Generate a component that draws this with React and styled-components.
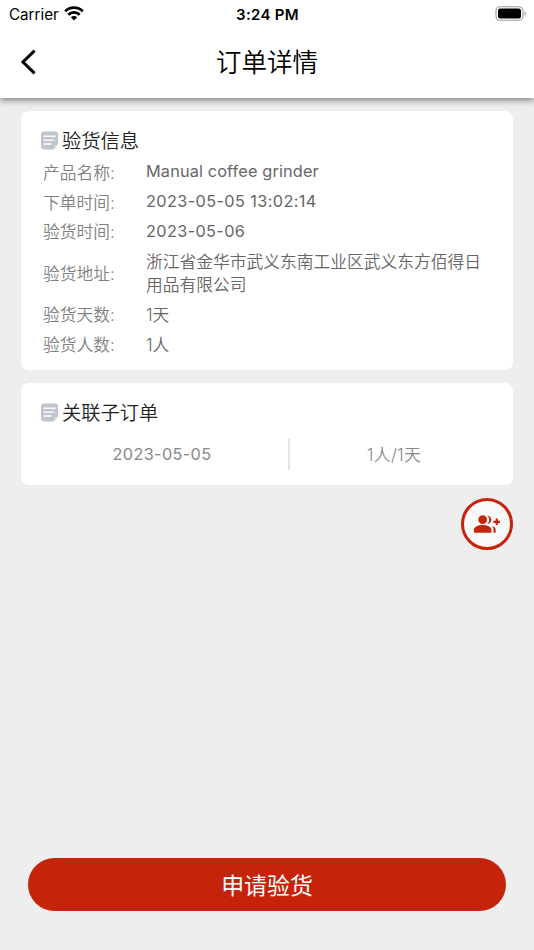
import React from 'react';
import styled, { createGlobalStyle } from 'styled-components';
import { MdGroupAdd } from 'react-icons/md';

const GlobalStyle = createGlobalStyle`
  * {
    box-sizing: border-box;
  }

  body {
    margin: 0;
    background: #eeeeee;
    font-family: Inter, 'Noto Sans CJK SC', sans-serif;
  }
`;

const Page = styled.div`
  height: 950px;
  display: flex;
  flex-direction: column;
  background: #eeeeee;
  overflow: hidden;
`;

const Header = styled.header`
  height: 98px;
  flex-shrink: 0;
  background: #fff;
  box-shadow: 0 2px 7px rgba(0, 0, 0, 0.5);
`;

const StatusBar = styled.div`
  height: 27px;
  padding: 0 7px 0 9px;
  display: grid;
  grid-template-columns: 1fr auto 1fr;
  align-items: center;
  color: #000;
`;

const Carrier = styled.div`
  display: flex;
  align-items: center;
  gap: 5px;
  font-size: 15.2px;
  line-height: 24px;

  span {
    padding-top: 2px;
  }

  svg {
    margin-bottom: 1px;
  }
`;

const Clock = styled.div`
  padding-top: 1px;
  padding-right: 1px;
  font-size: 15px;
  font-weight: 600;
  letter-spacing: 0.3px;
`;

const Battery = styled.svg`
  justify-self: end;
  margin-bottom: 1px;
`;

const NavBar = styled.div`
  height: 69px;
  padding: 0 20px;
  display: grid;
  grid-template-columns: 1fr auto 1fr;
  align-items: center;
`;

const BackButton = styled.button`
  width: 18px;
  height: 26px;
  padding: 0;
  border: 0;
  background: none;
`;

const NavTitle = styled.h1`
  margin: 0 0 1px;
  font-size: 25.6px;
  font-weight: 350;
  line-height: 36px;
  font-family: 'Noto Sans CJK SC', sans-serif;
`;

const Content = styled.main`
  flex: 1;
  padding: 13px 21px 0;
  display: flex;
  flex-direction: column;
  gap: 13px;
`;

const Card = styled.section`
  height: ${({ $height }) => $height}px;
  padding: 16px 20px 0;
  border-radius: 8px;
  background: #fff;
`;

const CardTitle = styled.h2`
  margin: 0;
  height: 26px;
  display: flex;
  align-items: center;
  gap: 4px;
  color: #222;
  font-size: 19.3px;
  font-weight: 350;
  font-family: 'Noto Sans CJK SC', sans-serif;
`;

const InfoList = styled.div`
  padding-top: 4.4px;
`;

const InfoRow = styled.div`
  min-height: 29.6px;
  padding: 4.4px 0 2.4px 2px;
  display: flex;
  align-items: center;
`;

const Label = styled.div`
  width: 103px;
  flex-shrink: 0;
  color: #808080;
  font-size: 16.75px;
  font-weight: 350;
  line-height: 23px;
`;

const Value = styled.div`
  padding-bottom: ${({ $spacing }) => ($spacing ? '4px' : 0)};
  color: #666;
  font-size: ${({ $spacing }) => ($spacing ? '16.3px' : '16.75px')};
  font-weight: ${({ $spacing }) => ($spacing ? 400 : 350)};
  letter-spacing: ${({ $spacing }) => $spacing || 0};
  line-height: ${({ $spacing }) => ($spacing ? '18px' : '23px')};
`;

const SubOrder = styled.div`
  margin: 14px -5px 0;
  display: flex;
  align-items: center;
  color: #888;
`;

const SubCell = styled.div`
  flex: ${({ $flex }) => $flex};
  padding-bottom: 2px;
  text-align: center;
  font-size: ${({ $size }) => $size};
  font-weight: ${({ $weight }) => $weight};
  letter-spacing: 0.35px;
`;

const Divider = styled.div`
  width: 2px;
  height: 31px;
  background: #e4e4e4;
`;

const AddButton = styled.button`
  width: 52px;
  height: 52px;
  padding: 0;
  align-self: flex-end;
  display: flex;
  align-items: center;
  justify-content: center;
  border: 3px solid #c5230a;
  border-radius: 50%;
  background: #f9f9f9;
  color: #c5230a;

  svg {
    flex-shrink: 0;
  }
`;

const Footer = styled.footer`
  padding: 0 28px 39px;
`;

const SubmitButton = styled.button`
  width: 100%;
  height: 53px;
  padding: 0 0 2px;
  border: 0;
  border-radius: 27px;
  background: #c5230a;
  color: #fff;
  font-family: 'Noto Sans CJK SC', sans-serif;
  font-size: 22.9px;
  font-weight: 400;
`;

const NoteIcon = () => (
  <svg width="17" height="19" viewBox="0 0 17 19">
    <path d="M3 0.5h11a3 3 0 0 1 3 3v10l-4.5 5H3a3 3 0 0 1-3-3v-12a3 3 0 0 1 3-3z" fill="#c0c4cc" />
    <path d="M17 13.8l-4.2 4.7v-2.7a2 2 0 0 1 2-2z" fill="#d8dbe0" />
    <path d="M3 5.3h11M3 9.1h10M3 13h7" stroke="#fff" strokeWidth="1.4" strokeLinecap="round" />
  </svg>
);

const WifiIcon = () => (
  <svg width="20" height="15" viewBox="0 0 20 15">
    <g fill="none" stroke="#000" strokeWidth="2.8">
      <path d="M1.2 5.2a12.6 12.6 0 0 1 17.6 0" />
      <path d="M4.3 8.7a8 8 0 0 1 11.4 0" />
    </g>
    <path d="M6.8 11.3a4.6 4.6 0 0 1 6.4 0L10 14.6z" />
  </svg>
);

const orderInfo = [
  { label: '产品名称:', value: 'Manual coffee grinder', spacing: '0.14px' },
  { label: '下单时间:', value: '2023-05-05 13:02:14', spacing: '0.38px' },
  { label: '验货时间:', value: '2023-05-06', spacing: '0.36px' },
  { label: '验货地址:', value: '浙江省金华市武义东南工业区武义东方佰得日用品有限公司' },
  { label: '验货天数:', value: '1天' },
  { label: '验货人数:', value: '1人' },
];

const App = () => {
  return (
    <Page>
      <GlobalStyle />
      <Header>
        <StatusBar>
          <Carrier>
            <span>Carrier</span>
            <WifiIcon />
          </Carrier>
          <Clock>3:24 PM</Clock>
          <Battery width="32" height="15" viewBox="0 0 32 15">
            <rect x="1" y="0.7" width="27" height="13.6" rx="4" fill="none" stroke="#999" strokeWidth="1.1" />
            <rect x="3" y="2.6" width="23" height="9.8" rx="2.2" />
            <path d="M29.6 5.2a2.6 2.6 0 0 1 0 4.6z" fill="#999" />
          </Battery>
        </StatusBar>
        <NavBar>
          <BackButton aria-label="返回">
            <svg width="18" height="26" viewBox="0 0 18 26">
              <path d="M14.6 1.6L3 13l11.6 11.4" fill="none" stroke="#000" strokeWidth="3" />
            </svg>
          </BackButton>
          <NavTitle>订单详情</NavTitle>
        </NavBar>
      </Header>

      <Content>
        <Card $height={259.4}>
          <CardTitle>
            <NoteIcon />
            验货信息
          </CardTitle>
          <InfoList>
            {orderInfo.map((item) => (
              <InfoRow key={item.label}>
                <Label>{item.label}</Label>
                <Value $spacing={item.spacing}>{item.value}</Value>
              </InfoRow>
            ))}
          </InfoList>
        </Card>

        <Card $height={102}>
          <CardTitle>
            <NoteIcon />
            关联子订单
          </CardTitle>
          <SubOrder>
            <SubCell $flex={252} $size="16.3px" $weight={400}>2023-05-05</SubCell>
            <Divider />
            <SubCell $flex={208} $size="16.9px" $weight={350}>1人/1天</SubCell>
          </SubOrder>
        </Card>

        <AddButton aria-label="添加人员">
          <MdGroupAdd size={26} />
        </AddButton>
      </Content>

      <Footer>
        <SubmitButton>申请验货</SubmitButton>
      </Footer>
    </Page>
  );
};

export default App;
